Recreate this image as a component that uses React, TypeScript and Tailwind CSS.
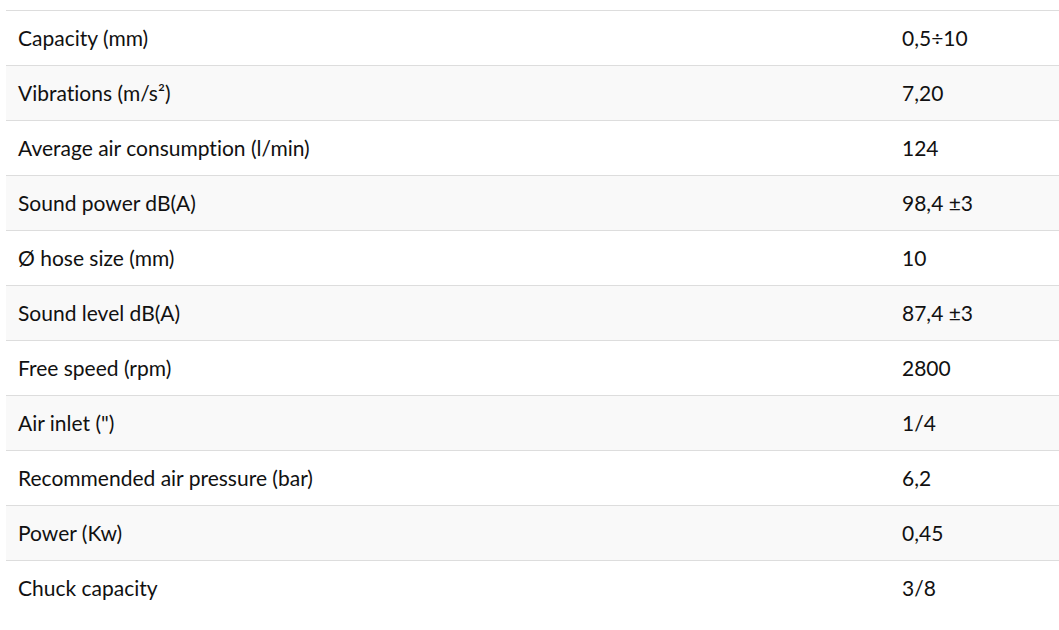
const rows: [string, string][] = [
  ["Capacity (mm)", "0,5÷10"],
  ["Vibrations (m/s²)", "7,20"],
  ["Average air consumption (l/min)", "124"],
  ["Sound power dB(A)", "98,4 ±3"],
  ["Ø hose size (mm)", "10"],
  ["Sound level dB(A)", "87,4 ±3"],
  ["Free speed (rpm)", "2800"],
  ["Air inlet (\")", "1/4"],
  ["Recommended air pressure (bar)", "6,2"],
  ["Power (Kw)", "0,45"],
  ["Chuck capacity", "3/8"],
];

export default function App() {
  return (
    <div className="min-h-screen bg-white pl-[6px] pt-[10px] font-['Lato','Liberation_Sans',sans-serif] text-[21px] text-[#111] [font-variant-ligatures:none]">
      <table className="w-[1053px] border-collapse">
        <tbody>
          {rows.map(([label, value], i) => (
            <tr
              key={label}
              className={`h-[55px] border-t border-[#dddddd] ${i % 2 === 1 ? "bg-[#f9f9f9]" : "bg-white"}`}
            >
              <td className="w-[884px] px-3 pb-[1px] align-middle">{label}</td>
              <td className="px-3 pb-[1px] align-middle">{value}</td>
            </tr>
          ))}
        </tbody>
      </table>
    </div>
  );
}
